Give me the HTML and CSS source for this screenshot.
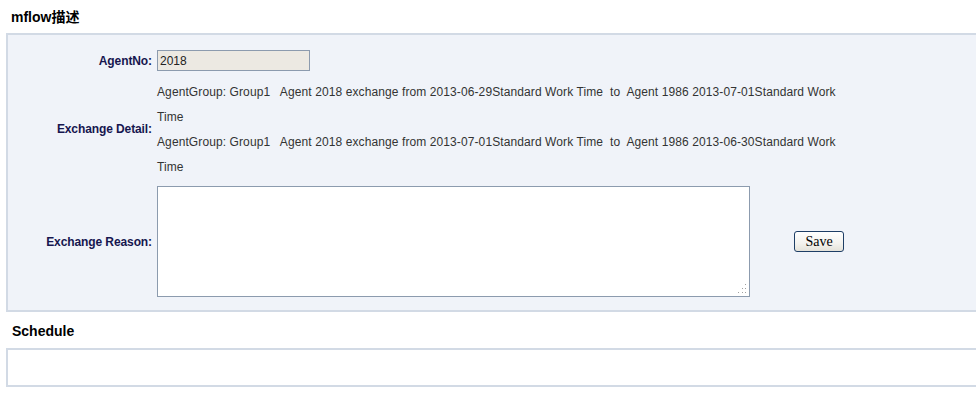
FILE: index.html
```html
<!DOCTYPE html>
<html>
<head>
<meta charset="utf-8">
<link rel="stylesheet" href="styles.css">
</head>
<body>
<div class="page">
  <h2 class="section-title first">mflow描述</h2>
  <div class="panel">
    <div class="form">
      <div class="label">AgentNo:</div>
      <div class="field"><input class="agent-input" type="text" value="2018" readonly></div>

      <div class="label">Exchange Detail:</div>
      <div class="field detail">
        <div>AgentGroup: Group1&nbsp;&nbsp; Agent 2018 exchange from 2013-06-29Standard Work Time&nbsp; to&nbsp; Agent 1986 2013-07-01Standard Work Time</div>
        <div>AgentGroup: Group1&nbsp;&nbsp; Agent 2018 exchange from 2013-07-01Standard Work Time&nbsp; to&nbsp; Agent 1986 2013-06-30Standard Work Time</div>
      </div>

      <div class="label">Exchange Reason:</div>
      <div class="field reason">
        <div class="reason-wrap">
          <textarea class="reason-text"></textarea>
          <svg class="grip" width="10" height="10" viewBox="0 0 10 10">
            <rect x="8" y="0" width="1" height="1" fill="#a0a0a0"/>
            <rect x="5" y="4" width="1" height="1" fill="#a0a0a0"/>
            <rect x="8" y="4" width="1" height="1" fill="#a0a0a0"/>
            <rect x="1" y="8" width="1" height="1" fill="#a0a0a0"/>
            <rect x="5" y="8" width="1" height="1" fill="#a0a0a0"/>
            <rect x="8" y="8" width="1" height="1" fill="#a0a0a0"/>
          </svg>
        </div>
        <button class="save-btn" type="button">Save</button>
      </div>
    </div>
  </div>
  <h2 class="section-title second">Schedule</h2>
  <div class="schedule-box"></div>
</div>
</body>
</html>
```

FILE: styles.css
```css
html, body {
  margin: 0;
  padding: 0;
  background: #ffffff;
}

.page {
  padding-left: 6px;
  font-family: "Liberation Sans", Arial, "Noto Sans CJK SC", sans-serif;
}

.section-title {
  margin: 0;
  font-size: 14px;
  font-weight: bold;
  color: #000;
  line-height: 16px;
}

.section-title.first {
  padding: 9px 0 8px 5px;
}

.section-title.second {
  padding: 11px 0 9px 6px;
}

.panel {
  background: #f0f3f9;
  border: 2px solid #d2dae5;
  border-right: none;
  padding: 15px 0 13px 0;
}

.form {
  display: grid;
  grid-template-columns: 144px 1fr;
  column-gap: 5px;
  row-gap: 8px;
  align-items: center;
}

.label {
  text-align: right;
  font-size: 12px;
  font-weight: bold;
  letter-spacing: -0.1px;
  color: #16164f;
}

.field {
  font-size: 12px;
  color: #333;
}

.agent-input {
  display: block;
  box-sizing: border-box;
  width: 153px;
  height: 21px;
  margin: 0;
  padding: 0 2px;
  border: 1px solid #8c9bae;
  background: #ece9e2;
  font-family: "Liberation Sans", Arial, sans-serif;
  font-size: 12px;
  color: #222;
  outline: none;
}

.detail {
  width: 700px;
  line-height: 25px;
  letter-spacing: 0.1px;
  margin-top: 1px;
  margin-bottom: -2px;
}

.reason {
  display: flex;
  align-items: center;
  gap: 44px;
}

.reason-wrap {
  position: relative;
  width: 593px;
  height: 111px;
}

.reason-text {
  box-sizing: border-box;
  display: block;
  width: 593px;
  height: 111px;
  margin: 0;
  border: 1px solid #8c9bae;
  background: #fff;
  resize: none;
}

.grip {
  position: absolute;
  right: 3px;
  bottom: 3px;
}

.save-btn {
  box-sizing: border-box;
  width: 50px;
  height: 21px;
  padding: 0;
  margin: 0;
  border: 1px solid #1e3e66;
  border-radius: 3px;
  background: linear-gradient(#ffffff, #f3f2ee 60%, #e4e2da);
  font-family: "Liberation Serif", "Times New Roman", serif;
  font-size: 14px;
  color: #000;
}

.schedule-box {
  height: 35px;
  border: 2px solid #d2dae5;
  border-right: none;
  background: #fff;
}
```
